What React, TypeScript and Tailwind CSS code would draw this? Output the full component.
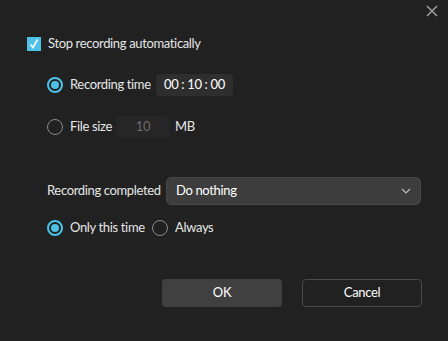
import React from "react";

function Radio({ checked }: { checked: boolean }) {
  return checked ? (
    <span className="flex h-[16px] w-[16px] shrink-0 items-center justify-center rounded-full border-2 border-[#4cc2e6]">
      <span className="block h-[8px] w-[8px] rounded-full bg-[#4cc2e6]" />
    </span>
  ) : (
    <span className="block h-[16px] w-[16px] shrink-0 rounded-full border border-[#8a8a8a]" />
  );
}

export default function App() {
  return (
    <div
      className="flex h-[341px] w-[448px] flex-col bg-[#212121] text-[13px] tracking-[-0.35px] text-[#e6e6e6]"
      style={{ fontFamily: 'Lato, sans-serif' }}
    >
      <div className="flex justify-end pr-[10px] pt-[5px]">
        <svg width="12" height="12" viewBox="0 0 12 12">
          <path d="M1 1 L11 11 M11 1 L1 11" stroke="#9a9a9a" strokeWidth="1.6" />
        </svg>
      </div>

      <div className="mt-[17px] flex h-[20px] items-center pl-[27px]">
        <span className="flex h-[14px] w-[14px] items-center justify-center bg-[#4cc2e6]">
          <svg width="12" height="12" viewBox="0 0 12 12">
            <path d="M2.5 6.5 L5 9.5 L9.5 1.5" stroke="#ffffff" strokeWidth="1.6" fill="none" />
          </svg>
        </span>
        <span className="ml-[7px] whitespace-nowrap">Stop recording automatically</span>
      </div>

      <div className="mt-[20px] flex h-[22px] items-center pl-[47px]">
        <Radio checked />
        <span className="ml-[7px] w-[82px] whitespace-nowrap">Recording time</span>
        <span className="ml-[4px] flex h-[22px] w-[77px] items-center rounded-[4px] bg-[#2e2e2e] pl-[8px] text-white">
          00 : 10 : 00
        </span>
      </div>

      <div className="mt-[20px] flex h-[22px] items-center pl-[47px]">
        <Radio checked={false} />
        <span className="ml-[7px] w-[42px] whitespace-nowrap">File size</span>
        <span className="ml-[4px] flex h-[22px] w-[54px] items-center justify-center rounded-[4px] bg-[#262626] text-[#6b6b6b]">
          10
        </span>
        <span className="ml-[5px]">MB</span>
      </div>

      <div className="mt-[39px] flex h-[28px] items-center pl-[47px]">
        <span className="w-[113px] whitespace-nowrap">Recording completed</span>
        <div className="ml-[6px] flex h-[28px] w-[255px] items-center justify-between rounded-[5px] border border-[#474747] bg-[#3d3d3d] pl-[9px] pr-[9px] text-white">
          <span>Do nothing</span>
          <svg width="10" height="6" viewBox="0 0 10 6">
            <path d="M1 1 L5 5 L9 1" stroke="#bdbdbd" strokeWidth="1.2" fill="none" />
          </svg>
        </div>
      </div>

      <div className="mt-[15px] flex h-[16px] items-center pl-[47px]">
        <Radio checked />
        <span className="ml-[7px] w-[75px] whitespace-nowrap">Only this time</span>
        <span className="ml-[7px]">
          <Radio checked={false} />
        </span>
        <span className="ml-[7px]">Always</span>
      </div>

      <div className="mt-[43px] flex gap-[20px] pl-[162px]">
        <button className="flex h-[28px] w-[120px] items-center justify-center rounded-[4px] bg-[#404040] text-white">
          OK
        </button>
        <button className="flex h-[28px] w-[120px] items-center justify-center rounded-[4px] border border-[#4a4a4a] bg-[#212121] text-white">
          Cancel
        </button>
      </div>
    </div>
  );
}
